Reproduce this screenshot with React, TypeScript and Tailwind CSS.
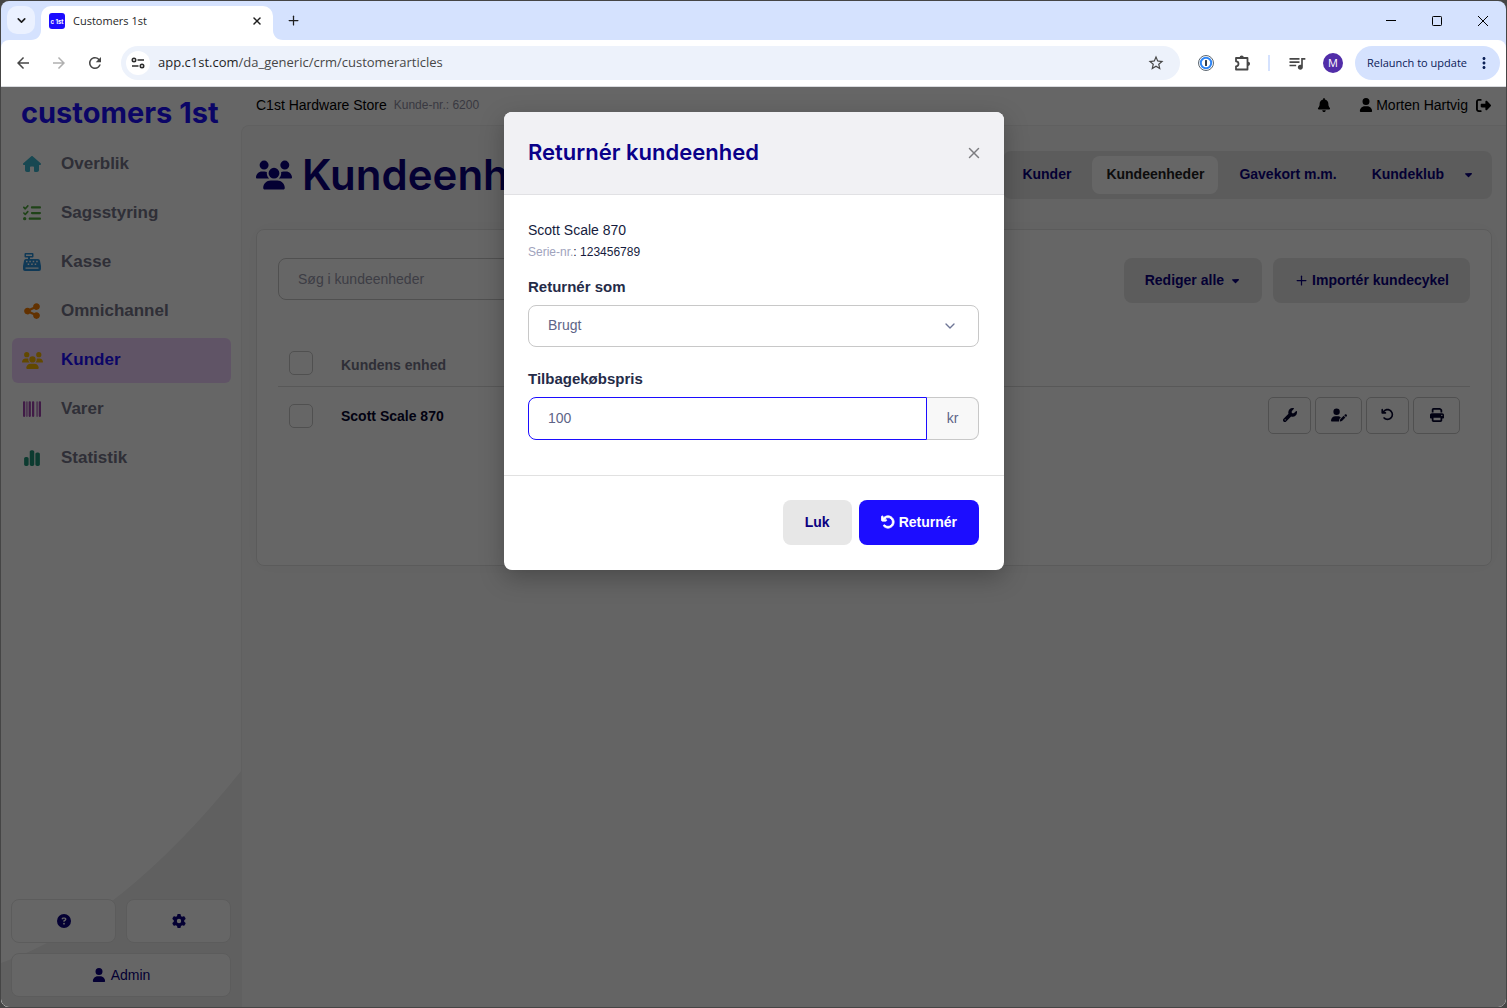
import { useState } from "react";
import type { ReactNode } from "react";
import type { IconType } from "react-icons";
import {
  FaArrowRotateLeft,
  FaBarcode,
  FaBell,
  FaCaretDown,
  FaChartSimple,
  FaCircleQuestion,
  FaGear,
  FaListCheck,
  FaPrint,
  FaRightFromBracket,
  FaShareNodes,
  FaUser,
  FaUserPen,
  FaUsers,
  FaWrench,
} from "react-icons/fa6";
import { MdArrowBack, MdArrowForward, MdMoreVert, MdQueueMusic, MdRefresh, MdStarOutline } from "react-icons/md";
import { ChevronDown, Plus, X } from "lucide-react";

function HouseIcon({ className }: { className?: string }) {
  return (
    <svg viewBox="0 0 576 512" fill="currentColor" className={className} aria-hidden="true">
      <path d="M575.8 255.5c0 18-15 32.1-32 32.1h-32l.7 160.2c.2 35.5-28.5 64.3-64 64.3H392c-22.100 0-40-17.900-40-40V360c0-13.300-10.700-24-24-24h-80c-13.300 0-24 10.700-24 24v112c0 22.100-17.900 40-40 40h-56.500c-35.300 0-64-28.700-64-64V287.600H32c-18 0-32-14-32-32.100 0-9 3-17 10-24L266.400 8c7-7 15-8 22-8s15 2 21 7l255.400 224.500c8 7 12 15 11 24z" />
    </svg>
  );
}

function RegisterIcon({ className }: { className?: string }) {
  return (
    <svg viewBox="0 0 18 18" fill="currentColor" className={className} aria-hidden="true">
      <path
        fillRule="evenodd"
        d="M2.500 0h7a1 1 0 0 1 1 1v2.500a1 1 0 0 1-1 1H7V6h8a2 2 0 0 1 2 1.700l1 5.300v3a2 2 0 0 1-2 2H2a2 2 0 0 1-2-2v-3l1-5.300A2 2 0 0 1 3 6h2V4.500H2.500a1 1 0 0 1-1-1V1a1 1 0 0 1 1-1zM3 1.500V3h6V1.500zM3 7.700v1.500h1.500V7.700zm3.300 0v1.500h1.500V7.700zm3.400 0v1.500h1.500V7.700zm3.500 0v1.500h1.500V7.700zM4.700 10.600v1.500h1.500v-1.500zm3.500 0v1.500h1.500v-1.500zm3.500 0v1.500h1.500v-1.500zM2.500 14.500v1.300h13v-1.300z"
      />
    </svg>
  );
}

function SiteSettingsIcon() {
  return (
    <svg viewBox="0 0 14 14" className="size-[14px]" fill="none" stroke="#2b2b2b" strokeWidth="1.600" aria-hidden="true">
      <circle cx="3" cy="4" r="1.700" />
      <path d="M6.500 4H13" />
      <circle cx="11" cy="10" r="1.700" />
      <path d="M1 10h6.500" />
    </svg>
  );
}

function PasswordIcon() {
  return (
    <svg viewBox="0 0 16 16" className="size-4" aria-hidden="true">
      <circle cx="8" cy="8" r="7.500" fill="#fff" stroke="#5d6770" />
      <circle cx="8" cy="8" r="5.200" fill="#fff" stroke="#2f86f6" strokeWidth="2" />
      <rect x="7.100" y="5" width="1.800" height="6" rx=".5" fill="#1b2a3a" />
    </svg>
  );
}

function PuzzleIcon() {
  return (
    <svg viewBox="0 0 18 18" className="size-[18px]" aria-hidden="true">
      <path
        d="M2 4h11.500v11.500H2v-3.200a2.500 2.500 0 0 0 0-5z"
        fill="none"
        stroke="currentColor"
        strokeWidth="1.800"
        strokeLinejoin="round"
      />
      <path d="M5.600 3.500a2.100 2.100 0 0 1 4.200 0zM14 7.700a2.100 2.100 0 0 1 0 4.200z" fill="currentColor" />
    </svg>
  );
}

// Concave foot on either side of the active tab
function TabFoot({ side }: { side: "left" | "right" }) {
  return (
    <svg viewBox="0 0 10 10" className="size-[10px] self-end" fill="#fff" aria-hidden="true">
      <path d={side === "left" ? "M10 0v10H0C6 10 10 6 10 0z" : "M0 0v10h10C4 10 0 6 0 0z"} />
    </svg>
  );
}

function BrowserChrome() {
  return (
    <header className="shrink-0 bg-[#d5e2fe] font-['Open_Sans',sans-serif] text-[#1f1f1f]">
      <div className="flex h-[39px] items-stretch">
        <button aria-label="Search tabs" className="mt-[5px] ml-[6px] grid size-7 place-items-center rounded-[10px] bg-[#ebf1ff]">
          <ChevronDown className="size-[13px]" strokeWidth={3} />
        </button>
        <div className="-ml-1 flex">
          <TabFoot side="left" />
          <div className="mt-[5px] flex w-[232px] items-center gap-2 rounded-t-[10px] bg-white pr-[10px] pb-1 pl-2">
            <span className="grid size-4 place-items-center rounded-[3px] bg-[#1c0dff] font-['Inter',sans-serif] text-[6px] font-bold text-white">
              c 1st
            </span>
            <span className="text-[11px]">Customers 1st</span>
            <button aria-label="Close tab" className="ml-auto">
              <X className="size-3" strokeWidth={3} />
            </button>
          </div>
          <TabFoot side="right" />
        </div>
        <button aria-label="New tab" className="ml-[2px] grid w-4 place-items-center">
          <Plus className="size-[15px]" strokeWidth={2} />
        </button>
        <div className="ml-auto flex">
          <button aria-label="Minimize" className="grid w-[46px] place-items-center">
            <svg viewBox="0 0 10 10" className="size-[10px]" stroke="#000"><path d="M0 4.500h10" /></svg>
          </button>
          <button aria-label="Maximize" className="grid w-[46px] place-items-center">
            <svg viewBox="0 0 10 10" className="size-[10px]" fill="none" stroke="#000"><rect x=".5" y=".5" width="9" height="9" rx=".8" /></svg>
          </button>
          <button aria-label="Close window" className="grid w-[46px] place-items-center">
            <svg viewBox="0 0 10 10" className="size-[10px]" stroke="#000"><path d="M0 0l10 10M10 0L0 10" /></svg>
          </button>
        </div>
      </div>

      <div className="flex h-[47px] items-center rounded-t-[8px] border-b border-[#d9dbdf] bg-white pr-[6px] pl-[13px] text-[#474747]">
        <button aria-label="Back"><MdArrowBack className="size-[18px]" /></button>
        <button aria-label="Forward" className="ml-[18px] text-[#b0b0b0]"><MdArrowForward className="size-[18px]" /></button>
        <button aria-label="Reload" className="ml-[18px]"><MdRefresh className="size-[18px]" /></button>
        <div className="ml-[17px] flex h-[34px] flex-1 items-center rounded-full bg-[#edf2fb] pr-[15px] pl-[5px]">
          <span className="grid size-6 place-items-center rounded-full bg-white"><SiteSettingsIcon /></span>
          <p className="ml-2 flex-1 text-[13px]">
            <span className="text-[#1f1f1f]">app.c1st.com</span>/da_generic/crm/customerarticles
          </p>
          <button aria-label="Bookmark"><MdStarOutline className="size-[18px]" /></button>
        </div>
        <div className="ml-[18px] flex items-center">
          <button aria-label="Password manager"><PasswordIcon /></button>
          <button aria-label="Extensions" className="ml-5"><PuzzleIcon /></button>
          <span className="ml-4 h-4 w-[2px] bg-[#d5e2fe]" />
          <button aria-label="Media" className="ml-[17px]"><MdQueueMusic className="size-5" /></button>
          <button className="ml-4 grid size-5 place-items-center rounded-full bg-[#512da8] text-[11px] text-white">M</button>
        </div>
        <button className="ml-3 flex h-[34px] items-center gap-1 rounded-full bg-[#d5e2fe] pr-[7px] pl-3 text-[11px] text-[#0a2057]">
          <span className="pr-1">Relaunch to update</span>
          <MdMoreVert className="size-[18px]" />
        </button>
      </div>
    </header>
  );
}

type NavItem = { label: string; icon: IconType | typeof HouseIcon; color: string; active?: boolean };

const navItems: NavItem[] = [
  { label: "Overblik", icon: HouseIcon, color: "text-[#3eb4cc]" },
  { label: "Sagsstyring", icon: FaListCheck, color: "text-[#4fa83d]" },
  { label: "Kasse", icon: RegisterIcon, color: "text-[#2a8fd8]" },
  { label: "Omnichannel", icon: FaShareNodes, color: "text-[#f57c00]" },
  { label: "Kunder", icon: FaUsers, color: "text-[#f5b400]", active: true },
  { label: "Varer", icon: FaBarcode, color: "text-[#a044b0]" },
  { label: "Statistik", icon: FaChartSimple, color: "text-[#1f9478]" },
];

function Sidebar() {
  const footerButton = "flex h-11 items-center justify-center gap-[5px] rounded-lg border border-[#e6e6e6] bg-white pb-px text-[#0a0080]";
  return (
    <aside className="relative flex w-60 shrink-0 flex-col bg-white px-[10px] pb-[10px]">
      <svg viewBox="0 0 240 236" className="absolute bottom-0 left-0 w-full" fill="#f0f0f0" aria-hidden="true">
        <path d="M240 0Q120 150 0 192V236H240z" />
      </svg>
      <a href="#" className="mt-2 ml-[10px] font-['Inter',sans-serif] text-[29px] leading-9 font-bold text-[#1c0dff]">
        customers 1st
      </a>
      <nav className="mt-[11px] ml-px flex flex-col gap-1">
        {navItems.map(({ label, icon: Icon, color, active }) => (
          <a
            key={label}
            href="#"
            className={`flex h-[45px] items-center rounded-md pb-px text-[17px] font-bold ${active ? "bg-[#f1d3ff] text-[#1c0dff]" : "text-[#757589]"}`}
          >
            <span className={`grid w-10 place-items-center ${color}`}>
              <Icon className={active ? "size-[21px]" : "size-[18px]"} />
            </span>
            <span className="ml-[9px]">{label}</span>
          </a>
        ))}
      </nav>
      <div className="relative mt-auto grid grid-cols-2 gap-[10px]">
        <button aria-label="Hjælp" className={footerButton}><FaCircleQuestion className="size-[14px]" /></button>
        <button aria-label="Indstillinger" className={footerButton}><FaGear className="size-[14px]" /></button>
        <button className={`${footerButton} col-span-2 text-sm`}><FaUser className="size-[14px]" />Admin</button>
      </div>
    </aside>
  );
}

function TopBar() {
  return (
    <div className="flex h-[38px] items-center pr-[15px] pb-[2px] pl-[15px] text-sm text-black">
      <span>C1st Hardware Store</span>
      <span className="ml-[7px] text-xs text-[#8f8fa3]">Kunde-nr.: 6200</span>
      <button aria-label="Notifikationer" className="ml-auto"><FaBell className="size-[14px]" /></button>
      <a href="#" className="ml-7 flex items-center gap-[3px]"><FaUser className="size-[14px]" />Morten Hartvig</a>
      <button aria-label="Log ud" className="ml-2"><FaRightFromBracket className="size-[15px]" /></button>
    </div>
  );
}

function TableAction({ label, wide, children }: { label: string; wide?: boolean; children: ReactNode }) {
  return (
    <button
      aria-label={label}
      className={`grid h-[37px] place-items-center rounded-[5px] border border-[#c8c8c8] pb-[2px] text-[#05052e] ${wide ? "w-[47px]" : "w-[43px]"}`}
    >
      {children}
    </button>
  );
}

function CustomerUnits() {
  const tab = "rounded-lg px-[14px] pb-[2px] leading-9";
  const checkbox = "block size-6 appearance-none rounded-[5px] border border-[#c8c8c8] bg-white";
  const action = "flex h-[45px] items-center rounded-lg bg-[#e7e7e7] px-[21px] pb-px text-sm font-bold text-[#0a0080]";
  return (
    <main className="flex-1 rounded-tl-lg border-t border-l border-[#f0f0f0] bg-[#fafafa] pr-[14px] pl-[14px]">
      <div className="mt-[25px] flex items-center justify-between">
        <h1 className="flex items-center gap-[10px] font-['Inter',sans-serif] text-[42px] leading-[48px] font-semibold text-[#0a0080]">
          <FaUsers className="size-9" />
          Kundeenheder
        </h1>
        <nav className="flex gap-[7px] rounded-lg bg-[#e7e7e7] p-[5px] text-sm font-bold text-[#0a0080]">
          <a href="#" className={tab}>Kunder</a>
          <a href="#" className={`${tab} bg-white text-[#222]`}>Kundeenheder</a>
          <a href="#" className={tab}>Gavekort m.m.</a>
          <div className="flex">
            <a href="#" className={tab}>Kundeklub</a>
            <button aria-label="Flere" className="pr-[13px] pb-[2px] pl-[5px]"><FaCaretDown className="size-[11px]" /></button>
          </div>
        </nav>
      </div>

      <section className="mt-[30px] min-h-[337px] rounded-lg border border-[#e4e4e4] bg-white px-[21px] pt-7 shadow-[0_0_20px_rgba(0,0,0,0.03)]">
        <div className="flex items-start justify-between">
          <input
            type="search"
            aria-label="Søg i kundeenheder"
            placeholder="Søg i kundeenheder"
            className="h-[42px] w-[400px] rounded-lg border border-[#c8c8c8] px-[19px] text-sm placeholder:text-[#9a9aac]"
          />
          <div className="flex gap-[11px]">
            <button className={`${action} gap-[6px]`}>Rediger alle <FaCaretDown className="size-[11px]" /></button>
            <button className={`${action} gap-[3px]`}><Plus className="size-[15px]" />Importér kundecykel</button>
          </div>
        </div>

        <table className="mt-[37px] w-full text-left text-sm">
          <thead>
            <tr className="border-b border-[#dcdcdc]">
              <th className="h-[46px] w-[63px] pl-[11px]">
                <input type="checkbox" aria-label="Vælg alle" className={checkbox} />
              </th>
              <th className="pt-1 text-[#757589]">Kundens enhed</th>
              <th />
            </tr>
          </thead>
          <tbody>
            <tr>
              <td className="h-[59px] pl-[11px]">
                <input type="checkbox" aria-label="Vælg Scott Scale 870" className={checkbox} />
              </td>
              <td className="font-bold text-[#05052e]">Scott Scale 870</td>
              <td>
                <div className="flex justify-end gap-1 pr-[10px]">
                  <TableAction label="Reparation"><FaWrench className="size-[14px]" /></TableAction>
                  <TableAction label="Rediger ejer" wide><FaUserPen className="size-4" /></TableAction>
                  <TableAction label="Returnér"><FaArrowRotateLeft className="size-[13px]" /></TableAction>
                  <TableAction label="Udskriv" wide><FaPrint className="size-[14px]" /></TableAction>
                </div>
              </td>
            </tr>
          </tbody>
        </table>
      </section>
    </main>
  );
}

function ReturnDialog() {
  const [state, setState] = useState("Brugt");
  const [price, setPrice] = useState("100");
  return (
    <div role="dialog" aria-labelledby="return-title" className="w-[500px] overflow-hidden rounded-lg bg-white text-sm shadow-[0_8px_24px_rgba(0,0,0,0.25)]">
      <div className="flex h-[83px] items-center justify-between border-b border-[#e1e1e4] bg-[#f1f1f4] px-6">
        <h2 id="return-title" className="font-['Inter',sans-serif] text-[22px] font-semibold text-[#0a0089]">
          Returnér kundeenhed
        </h2>
        <button aria-label="Luk dialog" className="text-[#7d7d80]">
          <X className="-mr-[3px] size-[18px]" strokeWidth={2} />
        </button>
      </div>

      <div className="pt-6 pr-[25px] pb-[35px] pl-6 leading-[22px] text-[#151b3d]">
        <p>Scott Scale 870</p>
        <p className="text-xs leading-[22px]"><span className="text-[#a0a3bd]">Serie-nr.</span>: 123456789</p>

        <label htmlFor="return-as" className="mt-[13px] block text-[15px] font-bold text-[#252b48]">Returnér som</label>
        <div className="relative mt-[7px]">
          <select
            id="return-as"
            value={state}
            onChange={(e) => setState(e.target.value)}
            className="block h-[42px] w-full appearance-none rounded-lg border border-[#c8c8c8] bg-white px-[19px] pb-[2px] text-[#5e6487]"
          >
            <option>Brugt</option>
            <option>Ny</option>
          </select>
          <ChevronDown className="pointer-events-none absolute top-[13px] right-[21px] size-4 text-[#6e7596]" />
        </div>

        <label htmlFor="return-price" className="mt-[21px] block text-[15px] font-bold text-[#252b48]">Tilbagekøbspris</label>
        <div className="mt-[7px] flex h-[43px] text-[#5e6487]">
          <input
            id="return-price"
            value={price}
            onChange={(e) => setPrice(e.target.value)}
            className="min-w-0 flex-1 rounded-l-lg border border-[#1c0dff] px-[19px] pb-[2px] outline-none"
          />
          <span className="grid w-[52px] place-items-center rounded-r-lg border border-l-0 border-[#c8c8c8] bg-[#f8f8f8] pb-[2px]">kr</span>
        </div>
      </div>

      <div className="flex justify-end gap-[7px] border-t border-[#e1e1e1] px-[25px] pt-6 pb-[25px] font-bold">
        <button className="h-[45px] rounded-lg bg-[#e7e7e7] px-[22px] pb-px text-[#0a0080]">Luk</button>
        <button className="flex h-[45px] items-center gap-1 rounded-lg bg-[#1c0dff] px-[22px] pb-px text-white">
          <FaArrowRotateLeft className="size-[14px] stroke-current stroke-[30]" />
          Returnér
        </button>
      </div>
    </div>
  );
}

export default function App() {
  return (
    <div className="flex min-h-screen flex-col bg-[#454545] p-px font-['Liberation_Sans',Arial,sans-serif]">
      <div className="flex flex-1 flex-col overflow-hidden rounded-lg">
        <BrowserChrome />
        <div className="relative flex flex-1 bg-white">
          <Sidebar />
          <div className="flex min-w-0 flex-1 flex-col">
            <TopBar />
            <CustomerUnits />
          </div>
          <div className="absolute inset-0 flex items-start justify-center bg-black/60 pt-[25px] pl-px">
            <ReturnDialog />
          </div>
        </div>
      </div>
    </div>
  );
}
